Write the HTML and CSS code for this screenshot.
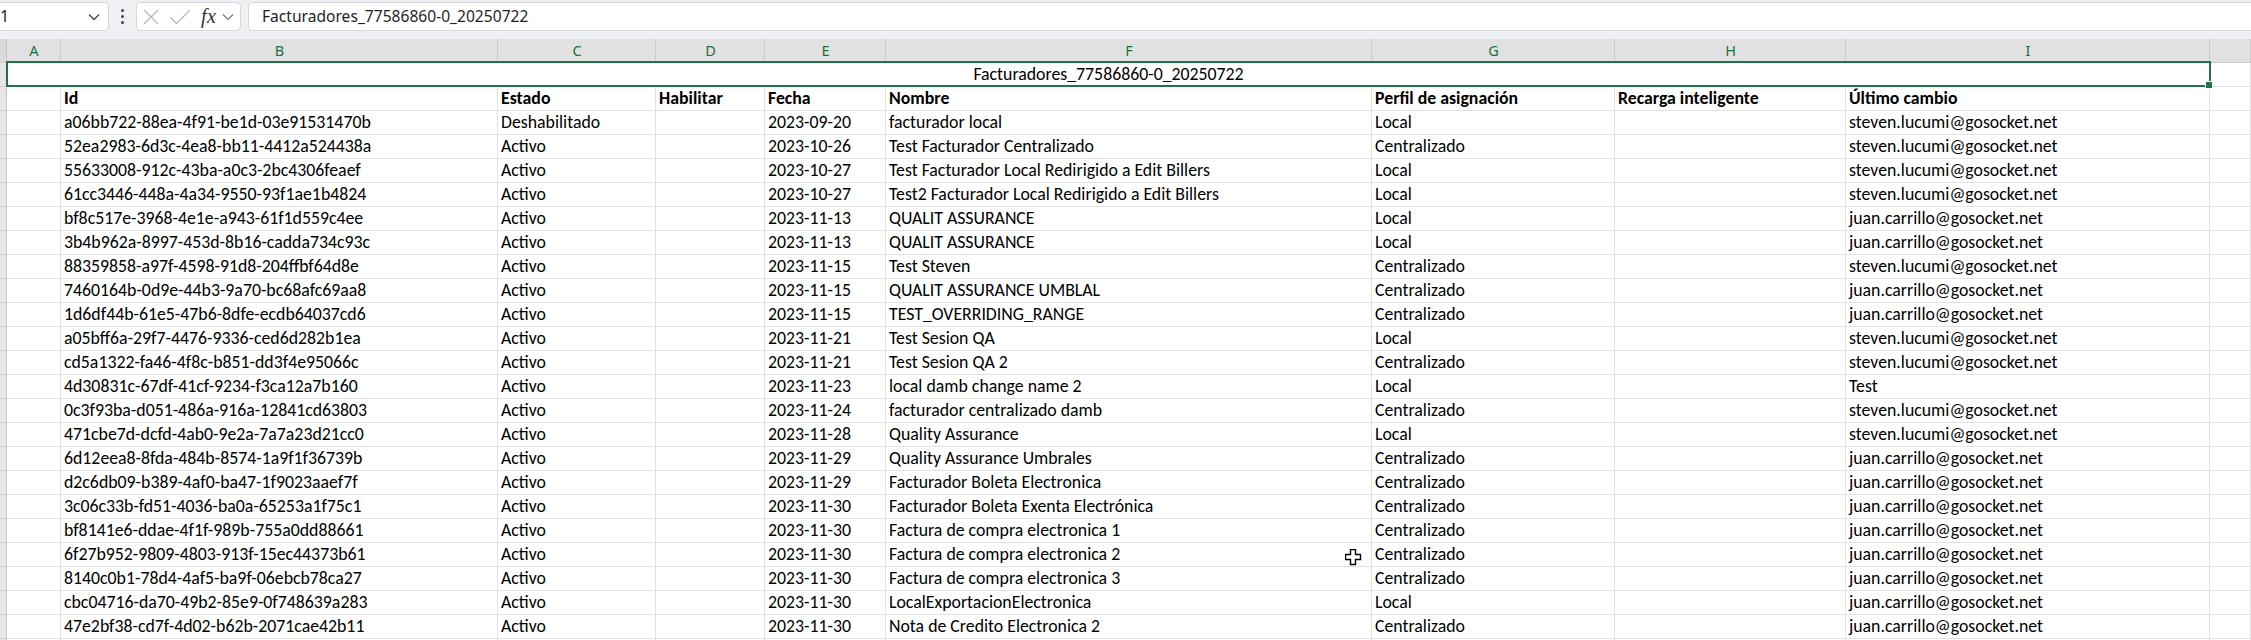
FILE: index.html
```html
<!DOCTYPE html>
<html lang="es">
<head>
<meta charset="utf-8">
<title>Facturadores_77586860-0_20250722</title>
<link rel="stylesheet" href="styles.css">
</head>
<body>
<div class="app">
  <div class="fbar">
    <div class="namebox">
      <span class="nb-text">1</span>
      <svg class="chev" width="12" height="8" viewBox="0 0 12 8"><path d="M1 1.5 L6 6.5 L11 1.5" fill="none" stroke="#444" stroke-width="1.3"/></svg>
    </div>
    <div class="dots"><i></i><i></i><i></i></div>
    <div class="fxbox">
      <svg class="ic-x" width="18" height="18" viewBox="0 0 18 18"><path d="M2 2 L16 16 M16 2 L2 16" stroke="#b8b8b8" stroke-width="1.3" fill="none"/></svg>
      <svg class="ic-ok" width="22" height="18" viewBox="0 0 22 18"><path d="M1.5 9.5 L7.5 15.5 L20.5 2.5" stroke="#b8b8b8" stroke-width="1.3" fill="none"/></svg>
      <span class="fx">fx</span>
      <svg class="ic-dd" width="12" height="8" viewBox="0 0 12 8"><path d="M1 1.5 L6 6.5 L11 1.5" fill="none" stroke="#777" stroke-width="1.2"/></svg>
    </div>
    <div class="formula">Facturadores_77586860-0_20250722</div>
  </div>

  <div class="sheet">
    <div class="row hdr"><span class="rh corner"></span><span>A</span><span>B</span><span>C</span><span>D</span><span>E</span><span>F</span><span>G</span><span>H</span><span>I</span><span class="unsel"></span></div>
    <div class="row title"><span class="rh"></span><span class="merged">Facturadores_77586860-0_20250722</span><span></span></div>
    <div class="row bold"><span class="rh"></span><span></span><span>Id</span><span>Estado</span><span>Habilitar</span><span>Fecha</span><span>Nombre</span><span>Perfil de asignación</span><span>Recarga inteligente</span><span>Último cambio</span><span></span></div>
    <div class="row"><span class="rh"></span><span></span><span>a06bb722-88ea-4f91-be1d-03e91531470b</span><span>Deshabilitado</span><span></span><span>2023-09-20</span><span>facturador local</span><span>Local</span><span></span><span>steven.lucumi@gosocket.net</span><span></span></div>
    <div class="row"><span class="rh"></span><span></span><span>52ea2983-6d3c-4ea8-bb11-4412a524438a</span><span>Activo</span><span></span><span>2023-10-26</span><span>Test Facturador Centralizado</span><span>Centralizado</span><span></span><span>steven.lucumi@gosocket.net</span><span></span></div>
    <div class="row"><span class="rh"></span><span></span><span>55633008-912c-43ba-a0c3-2bc4306feaef</span><span>Activo</span><span></span><span>2023-10-27</span><span>Test Facturador Local Redirigido a Edit Billers</span><span>Local</span><span></span><span>steven.lucumi@gosocket.net</span><span></span></div>
    <div class="row"><span class="rh"></span><span></span><span>61cc3446-448a-4a34-9550-93f1ae1b4824</span><span>Activo</span><span></span><span>2023-10-27</span><span>Test2 Facturador Local Redirigido a Edit Billers</span><span>Local</span><span></span><span>steven.lucumi@gosocket.net</span><span></span></div>
    <div class="row"><span class="rh"></span><span></span><span>bf8c517e-3968-4e1e-a943-61f1d559c4ee</span><span>Activo</span><span></span><span>2023-11-13</span><span>QUALIT ASSURANCE</span><span>Local</span><span></span><span>juan.carrillo@gosocket.net</span><span></span></div>
    <div class="row"><span class="rh"></span><span></span><span>3b4b962a-8997-453d-8b16-cadda734c93c</span><span>Activo</span><span></span><span>2023-11-13</span><span>QUALIT ASSURANCE</span><span>Local</span><span></span><span>juan.carrillo@gosocket.net</span><span></span></div>
    <div class="row"><span class="rh"></span><span></span><span>88359858-a97f-4598-91d8-204ffbf64d8e</span><span>Activo</span><span></span><span>2023-11-15</span><span>Test Steven</span><span>Centralizado</span><span></span><span>steven.lucumi@gosocket.net</span><span></span></div>
    <div class="row"><span class="rh"></span><span></span><span>7460164b-0d9e-44b3-9a70-bc68afc69aa8</span><span>Activo</span><span></span><span>2023-11-15</span><span>QUALIT ASSURANCE UMBLAL</span><span>Centralizado</span><span></span><span>juan.carrillo@gosocket.net</span><span></span></div>
    <div class="row"><span class="rh"></span><span></span><span>1d6df44b-61e5-47b6-8dfe-ecdb64037cd6</span><span>Activo</span><span></span><span>2023-11-15</span><span>TEST_OVERRIDING_RANGE</span><span>Centralizado</span><span></span><span>juan.carrillo@gosocket.net</span><span></span></div>
    <div class="row"><span class="rh"></span><span></span><span>a05bff6a-29f7-4476-9336-ced6d282b1ea</span><span>Activo</span><span></span><span>2023-11-21</span><span>Test Sesion QA</span><span>Local</span><span></span><span>steven.lucumi@gosocket.net</span><span></span></div>
    <div class="row"><span class="rh"></span><span></span><span>cd5a1322-fa46-4f8c-b851-dd3f4e95066c</span><span>Activo</span><span></span><span>2023-11-21</span><span>Test Sesion QA 2</span><span>Centralizado</span><span></span><span>steven.lucumi@gosocket.net</span><span></span></div>
    <div class="row"><span class="rh"></span><span></span><span>4d30831c-67df-41cf-9234-f3ca12a7b160</span><span>Activo</span><span></span><span>2023-11-23</span><span>local damb change name 2</span><span>Local</span><span></span><span>Test</span><span></span></div>
    <div class="row"><span class="rh"></span><span></span><span>0c3f93ba-d051-486a-916a-12841cd63803</span><span>Activo</span><span></span><span>2023-11-24</span><span>facturador centralizado damb</span><span>Centralizado</span><span></span><span>steven.lucumi@gosocket.net</span><span></span></div>
    <div class="row"><span class="rh"></span><span></span><span>471cbe7d-dcfd-4ab0-9e2a-7a7a23d21cc0</span><span>Activo</span><span></span><span>2023-11-28</span><span>Quality Assurance</span><span>Local</span><span></span><span>steven.lucumi@gosocket.net</span><span></span></div>
    <div class="row"><span class="rh"></span><span></span><span>6d12eea8-8fda-484b-8574-1a9f1f36739b</span><span>Activo</span><span></span><span>2023-11-29</span><span>Quality Assurance Umbrales</span><span>Centralizado</span><span></span><span>juan.carrillo@gosocket.net</span><span></span></div>
    <div class="row"><span class="rh"></span><span></span><span>d2c6db09-b389-4af0-ba47-1f9023aaef7f</span><span>Activo</span><span></span><span>2023-11-29</span><span>Facturador Boleta Electronica</span><span>Centralizado</span><span></span><span>juan.carrillo@gosocket.net</span><span></span></div>
    <div class="row"><span class="rh"></span><span></span><span>3c06c33b-fd51-4036-ba0a-65253a1f75c1</span><span>Activo</span><span></span><span>2023-11-30</span><span>Facturador Boleta Exenta Electrónica</span><span>Centralizado</span><span></span><span>juan.carrillo@gosocket.net</span><span></span></div>
    <div class="row"><span class="rh"></span><span></span><span>bf8141e6-ddae-4f1f-989b-755a0dd88661</span><span>Activo</span><span></span><span>2023-11-30</span><span>Factura de compra electronica 1</span><span>Centralizado</span><span></span><span>juan.carrillo@gosocket.net</span><span></span></div>
    <div class="row"><span class="rh"></span><span></span><span>6f27b952-9809-4803-913f-15ec44373b61</span><span>Activo</span><span></span><span>2023-11-30</span><span>Factura de compra electronica 2</span><span>Centralizado</span><span></span><span>juan.carrillo@gosocket.net</span><span></span></div>
    <div class="row"><span class="rh"></span><span></span><span>8140c0b1-78d4-4af5-ba9f-06ebcb78ca27</span><span>Activo</span><span></span><span>2023-11-30</span><span>Factura de compra electronica 3</span><span>Centralizado</span><span></span><span>juan.carrillo@gosocket.net</span><span></span></div>
    <div class="row"><span class="rh"></span><span></span><span>cbc04716-da70-49b2-85e9-0f748639a283</span><span>Activo</span><span></span><span>2023-11-30</span><span>LocalExportacionElectronica</span><span>Local</span><span></span><span>juan.carrillo@gosocket.net</span><span></span></div>
    <div class="row"><span class="rh"></span><span></span><span>47e2bf38-cd7f-4d02-b62b-2071cae42b11</span><span>Activo</span><span></span><span>2023-11-30</span><span>Nota de Credito Electronica 2</span><span>Centralizado</span><span></span><span>juan.carrillo@gosocket.net</span><span></span></div>
    <div class="row"><span class="rh"></span><span></span><span></span><span></span><span></span><span></span><span></span><span></span><span></span><span></span><span></span></div>

    <div class="selection"><i class="handle"></i></div>
    <svg class="cursor" width="17" height="17" viewBox="0 0 17 17"><path d="M5.5 0.5 H10.5 V5.5 H15.5 V10.5 H10.5 V15.5 H5.5 V10.5 H0.5 V5.5 H5.5 Z" fill="#fff" stroke="#000" stroke-width="1.4"/></svg>
  </div>
</div>
</body>
</html>
```

FILE: styles.css
```css
html, body {
  margin: 0;
  padding: 0;
  background: #ffffff;
}
body {
  width: 2251px;
  height: 640px;
  overflow: hidden;
}
.app {
  display: flex;
  flex-direction: column;
  width: 2251px;
  height: 640px;
  overflow: hidden;
}

/* formula bar */
.fbar {
  height: 39px;
  flex: none;
  box-sizing: border-box;
  padding-top: 2px;
  background: #eef0f3;
  display: flex;
  align-items: flex-start;
  font-family: "Noto Sans", "Open Sans", sans-serif;
}
.namebox {
  width: 109px;
  height: 29px;
  box-sizing: border-box;
  background: #fff;
  border: 1px solid #d6d8dc;
  border-left: none;
  border-radius: 0 5px 5px 0;
  display: flex;
  align-items: center;
  justify-content: space-between;
  padding: 0 8px 0 0;
}
.nb-text {
  font-size: 16px;
  color: #222;
  line-height: 27px;
}
.dots {
  width: 27px;
  height: 29px;
  display: flex;
  flex-direction: column;
  align-items: center;
  justify-content: center;
  gap: 3px;
}
.dots i {
  display: block;
  width: 3px;
  height: 3px;
  background: #444;
  border-radius: 50%;
}
.fxbox {
  width: 105px;
  height: 29px;
  box-sizing: border-box;
  background: #fff;
  border: 1px solid #d6d8dc;
  border-radius: 5px;
  display: flex;
  align-items: center;
  padding: 0 0 0 5px;
}
.ic-ok {
  margin-left: 9px;
}
.fx {
  margin-left: 10px;
  font-family: "Liberation Serif", serif;
  font-style: italic;
  font-size: 20px;
  color: #333;
  line-height: 27px;
  letter-spacing: 0.5px;
}
.ic-dd {
  margin-left: 6px;
}
.formula {
  margin-left: 7px;
  flex: 1;
  height: 29px;
  box-sizing: border-box;
  background: #fff;
  border: 1px solid #d6d8dc;
  border-right: none;
  border-radius: 5px 0 0 5px;
  padding-left: 13px;
  font-size: 15.6px;
  line-height: 27px;
  color: #1f1f1f;
}

/* sheet */
.sheet {
  position: relative;
  flex: 1;
  font-family: Carlito, Calibri, Lato, sans-serif;
  font-size: 17.8px;
  color: #000;
}
.row {
  display: grid;
  grid-template-columns: 7px 54px 437px 158px 109px 121px 486px 243px 231px 364px 1fr;
  height: 24px;
}
.row > span {
  box-sizing: border-box;
  border-right: 1px solid #e1e1e1;
  border-bottom: 1px solid #e1e1e1;
  padding: 0 2px 0 3px;
  line-height: 23px;
  white-space: nowrap;
  overflow: hidden;
}
.row > .rh {
  background: #e6e6e6;
  border-right-color: #c6c6c6;
  border-bottom-color: #d0d0d0;
  padding: 0;
}
.bold > span {
  font-weight: bold;
}
.merged {
  grid-column: 2 / span 9;
  text-align: center;
}

/* column headers */
.hdr > span {
  background: #e1e1e1;
  border-right-color: #cbcbcb;
  border-bottom-color: #c6c6c6;
  text-align: center;
  font-family: "Noto Sans", "Open Sans", sans-serif;
  font-size: 14.5px;
  color: #1d7044;
}
.hdr > .corner {
  background: #dadada;
}

/* selection of merged A1:I1 */
.selection {
  position: absolute;
  left: 6px;
  top: 22px;
  width: 2205px;
  height: 26px;
  box-sizing: border-box;
  border: 2px solid #217346;
  pointer-events: none;
}
.handle {
  position: absolute;
  right: -4px;
  bottom: -4px;
  width: 6px;
  height: 6px;
  background: #217346;
  border: 1px solid #fff;
}
.cursor {
  position: absolute;
  left: 1345px;
  top: 510px;
}
```
